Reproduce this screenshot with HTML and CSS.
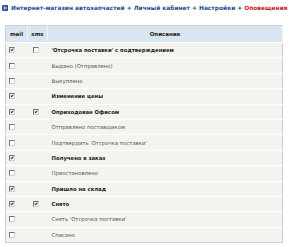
FILE: index.html
```html
<!DOCTYPE html>
<html>
<head>
<meta charset="utf-8">
<link rel="stylesheet" href="styles.css">
</head>
<body>
<div class="crumbs">
  <span class="logo"><svg width="6" height="6" viewBox="0 0 6 6"><rect width="6" height="6" rx="1" fill="#2a4f9c"/><path d="M1.5 1.5 L3 3 L1.5 4.5 M3 1.5 L4.5 3 L3 4.5" stroke="#fff" stroke-width="0.8" fill="none"/></svg></span>
  <span class="link">Интернет-магазин автозапчастей</span>
  <span class="sep">+</span>
  <span class="link">Личный кабинет</span>
  <span class="sep">+</span>
  <span class="link">Настройки</span>
  <span class="sep">+</span>
  <span class="current">Оповещения</span>
</div>
<table class="grid">
  <thead>
    <tr><th class="c-mail">mail</th><th class="c-sms">sms</th><th class="c-desc">Описание</th></tr>
  </thead>
  <tbody>
    <tr><td><span class="cb on"></span></td><td><span class="cb"></span></td><td class="b">'Отсрочка поставки' с подтверждением</td></tr>
    <tr><td><span class="cb"></span></td><td></td><td>Выдано (Отправлено)</td></tr>
    <tr><td><span class="cb"></span></td><td></td><td>Выкуплено</td></tr>
    <tr><td><span class="cb on"></span></td><td></td><td class="b">Изменение цены</td></tr>
    <tr><td><span class="cb on"></span></td><td><span class="cb on"></span></td><td class="b">Оприходован Офисом</td></tr>
    <tr><td><span class="cb"></span></td><td></td><td>Отправлено поставщиком</td></tr>
    <tr><td><span class="cb"></span></td><td></td><td>Подтвердить 'Отсрочка поставки'</td></tr>
    <tr><td><span class="cb on"></span></td><td></td><td class="b">Получено в заказ</td></tr>
    <tr><td><span class="cb"></span></td><td></td><td>Приостановлено</td></tr>
    <tr><td><span class="cb on"></span></td><td></td><td class="b">Пришло на склад</td></tr>
    <tr><td><span class="cb on"></span></td><td><span class="cb on"></span></td><td class="b">Снято</td></tr>
    <tr><td><span class="cb"></span></td><td></td><td>Снять 'Отсрочка поставки'</td></tr>
    <tr><td><span class="cb"></span></td><td></td><td>Списано</td></tr>
  </tbody>
</table>
</body>
</html>
```
FILE: styles.css
```css
html, body {
  margin: 0;
  padding: 0;
  background: #ffffff;
}
body {
  font-family: "DejaVu Sans", Verdana, sans-serif;
  width: 300px;
  height: 247px;
  overflow: hidden;
}
.crumbs {
  display: flex;
  align-items: center;
  gap: 2px;
  padding: 4px 0 0 2px;
  height: 7px;
  font-size: 5.9px;
  font-weight: bold;
  white-space: nowrap;
}
.logo {
  display: flex;
  margin-right: 1px;
}
.link { color: #2b4a8f; }
.sep { color: #2b4a8f; }
.current { color: #c41a1a; }

.grid {
  margin: 14px 0 0 5px;
  width: 278px;
  border-collapse: collapse;
  border: 1px solid #c4d2df;
  font-size: 5.3px;
  color: #555;
}
.grid th {
  background: #d9e5f1;
  height: 16px;
  padding: 0;
  font-weight: bold;
  color: #222;
  font-size: 5.5px;
  border-right: 1px solid #eef3f8;
}
.c-mail { width: 21px; }
.c-sms { width: 19px; }
.grid td {
  background: #f3f3ef;
  height: 14.4px;
  padding: 0;
  border-top: 1px solid #ffffff;
}
.grid td:first-child { padding-left: 3px; }
.grid td:nth-child(2) { padding-left: 5px; }
.grid td:last-child { padding-left: 4px; }
.grid td.b {
  font-weight: bold;
  color: #222;
}
.cb {
  display: block;
  width: 4px;
  height: 4px;
  border-top: 1px solid #777;
  border-left: 1px solid #777;
  border-right: 1px solid #d0d0d0;
  border-bottom: 1px solid #d0d0d0;
  background: #fff;
  position: relative;
}
.cb.on::after {
  content: "";
  position: absolute;
  left: 1px;
  top: 0;
  width: 1px;
  height: 2px;
  border-right: 1px solid #333;
  border-bottom: 1px solid #333;
  transform: rotate(40deg);
}
```
